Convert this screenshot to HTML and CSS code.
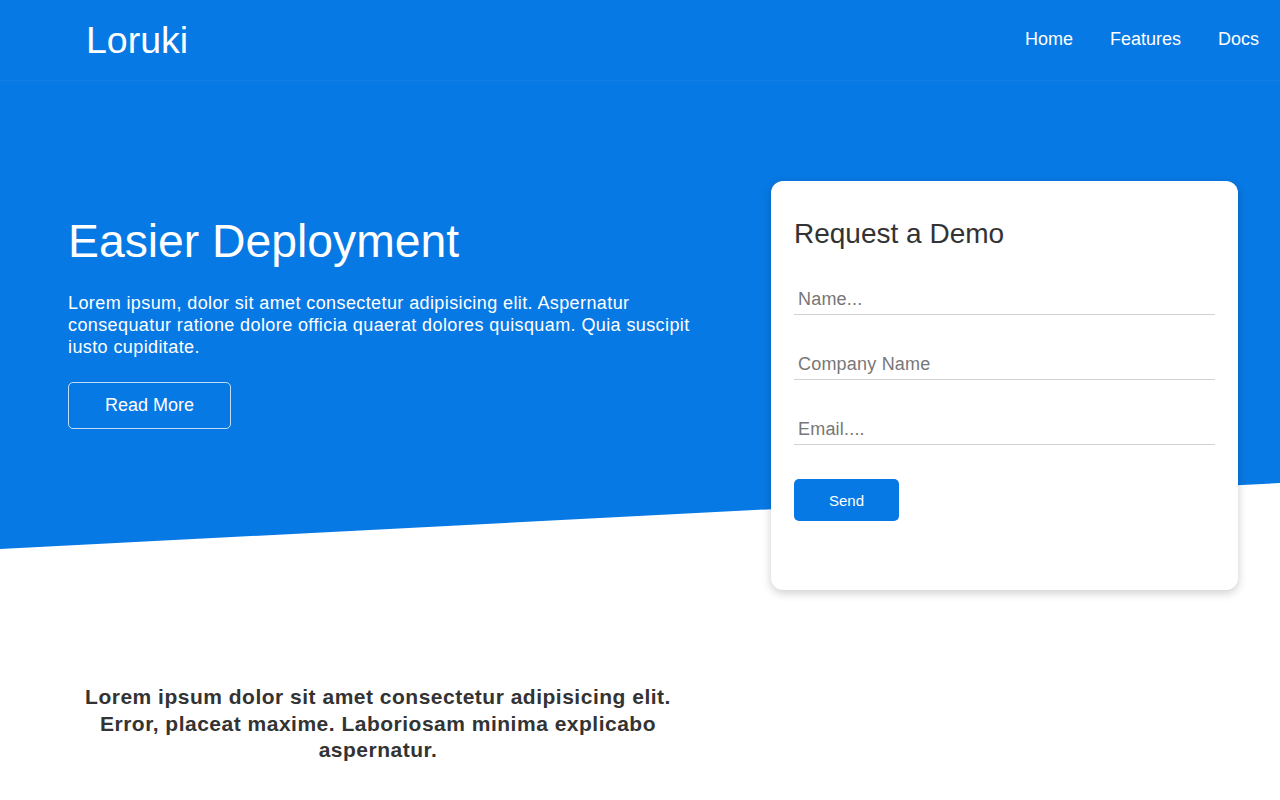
FILE: index.html
```html
<!DOCTYPE html>
<html lang="en">
<head>
<meta charset="utf-8">
<title>Loruki</title>
<link rel="stylesheet" href="styles.css">
</head>
<body>
<div class="top">
  <header class="navbar">
    <h1 class="logo">Loruki</h1>
    <nav>
      <ul class="nav-list">
        <li><a href="#">Home</a></li>
        <li><a href="#">Features</a></li>
        <li><a href="#">Docs</a></li>
      </ul>
    </nav>
  </header>
  <section class="showcase">
    <div class="showcase-text">
      <h2 class="showcase-title">Easier Deployment</h2>
      <p class="showcase-lead">Lorem ipsum, dolor sit amet consectetur adipisicing elit. Aspernatur consequatur ratione dolore officia quaerat dolores quisquam. Quia suscipit iusto cupiditate.</p>
      <a href="#" class="btn-outline">Read More</a>
    </div>
    <div class="card">
      <h3 class="card-title">Request a Demo</h3>
      <form class="demo-form">
        <div class="field"><input type="text" placeholder="Name..."></div>
        <div class="field"><input type="text" placeholder="Company Name"></div>
        <div class="field"><input type="email" placeholder="Email...."></div>
        <button type="button" class="btn-send">Send</button>
      </form>
    </div>
  </section>
</div>
<section class="stats">
  <h3 class="stats-heading">Lorem ipsum dolor sit amet consectetur adipisicing elit. Error, placeat maxime. Laboriosam minima explicabo aspernatur.</h3>
</section>
</body>
</html>
```

FILE: styles.css
```css
* { box-sizing: border-box; }

body {
  margin: 0;
  font-family: "Liberation Sans", Arial, sans-serif;
  color: #333;
  background: #fff;
}

.top {
  position: relative;
}

.top::before {
  content: "";
  position: absolute;
  top: 0;
  left: 0;
  right: 0;
  height: 549px;
  background: #0779e4;
  clip-path: polygon(0 0, 100% 0, 100% 483px, 0 100%);
  z-index: -1;
}

.navbar {
  height: 81px;
  display: flex;
  align-items: center;
  justify-content: space-between;
  padding: 0 21px 0 86px;
  border-bottom: 1px solid rgba(255, 255, 255, 0.04);
  color: #fff;
}

.logo {
  margin: 0;
  font-size: 37.5px;
  font-weight: 400;
}

.nav-list {
  list-style: none;
  margin: 0;
  padding: 0;
  display: flex;
  gap: 37px;
}

.nav-list a {
  color: #fff;
  text-decoration: none;
  font-size: 18px;
  position: relative;
  top: -1px;
}

.showcase {
  display: grid;
  grid-template-columns: 1fr 467px;
  column-gap: 63px;
  align-items: start;
  padding: 100px 42px 0 68px;
}

.showcase-text {
  color: #fff;
  padding-top: 33px;
}

.showcase-title {
  margin: 0;
  font-size: 46.3px;
  font-weight: 400;
  line-height: 1.2;
}

.showcase-lead {
  margin: 22px 0 24px;
  font-size: 18px;
  line-height: 22px;
  letter-spacing: 0.4px;
}

.btn-outline {
  display: inline-block;
  width: 163px;
  padding: 12px 0;
  text-align: center;
  color: #fff;
  text-decoration: none;
  font-size: 18px;
  line-height: 21px;
  border: 1px solid rgba(255, 255, 255, 0.75);
  border-radius: 5px;
}

.card {
  background: #fff;
  border-radius: 12px;
  box-shadow: 0 3px 10px rgba(0, 0, 0, 0.2);
  padding: 37px 23px 69px;
}

.card-title {
  margin: 0;
  font-size: 28px;
  font-weight: 400;
  line-height: 32px;
  color: #333;
}

.field {
  margin-top: 35px;
}

.field input {
  display: block;
  width: 100%;
  border: none;
  border-bottom: 1px solid #cfd3d6;
  padding: 4px 4px;
  font-family: "Liberation Sans", Arial, sans-serif;
  font-size: 18px;
  line-height: 21px;
  letter-spacing: 0.2px;
  color: #333;
  outline: none;
  background: transparent;
}

.field input::placeholder {
  color: #777;
}

.btn-send {
  display: block;
  margin-top: 34px;
  width: 105px;
  height: 42px;
  border: none;
  border-radius: 5px;
  background: #0779e4;
  color: #fff;
  font-family: "Liberation Sans", Arial, sans-serif;
  font-size: 15px;
  cursor: pointer;
}

.stats {
  padding: 94px 0 40px 68px;
}

.stats-heading {
  margin: 0;
  width: 620px;
  text-align: center;
  font-size: 21px;
  font-weight: 700;
  line-height: 26.5px;
  letter-spacing: 0.5px;
  color: #333;
}
```
